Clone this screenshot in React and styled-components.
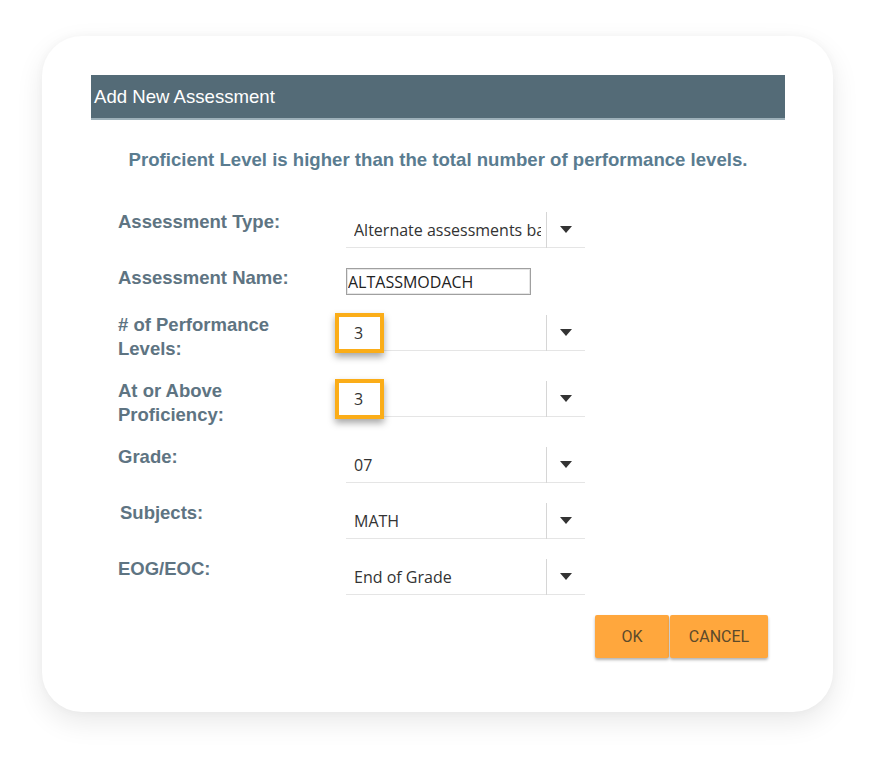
import React from "react";
import styled, { createGlobalStyle } from "styled-components";

const GlobalStyle = createGlobalStyle`
  html, body {
    margin: 0;
    padding: 0;
    background: #ffffff;
  }
  * {
    box-sizing: border-box;
  }
`;

const fields = [
  { label: "Assessment Type:", value: "Alternate assessments based on modified achievement standards" },
  { label: "Assessment Name:", input: "ALTASSMODACH" },
  { label: "# of Performance\nLevels:", value: "3", marked: true },
  { label: "At or Above\nProficiency:", value: "3", marked: true },
  { label: "Grade:", value: "07" },
  { label: "Subjects:", value: "MATH", indent: 2 },
  { label: "EOG/EOC:", value: "End of Grade" },
];

export default function App() {
  return (
    <Page>
      <GlobalStyle />
      <Card>
        <TitleBar>Add New Assessment</TitleBar>
        <Message>
          Proficient Level is higher than the total number of performance
          levels.
        </Message>
        <Form>
          {fields.map((f) => (
            <Row key={f.label}>
              <Label $indent={f.indent}>
                {f.label.split("\n").map((line, i) => (
                  <React.Fragment key={i}>
                    {i > 0 && <br />}
                    {line}
                  </React.Fragment>
                ))}
              </Label>
              {f.input ? (
                <TextInput defaultValue={f.input} />
              ) : (
                <Select>
                  <SelectValue title={f.value}>{f.value}</SelectValue>
                  <ArrowBox>
                    <svg width="12" height="7" viewBox="0 0 12 7">
                      <path d="M0 0 L12 0 L6 7 Z" fill="#333" />
                    </svg>
                  </ArrowBox>
                  {f.marked && <Highlight />}
                </Select>
              )}
            </Row>
          ))}
        </Form>
        <Buttons>
          <Button>OK</Button>
          <Button $wide>CANCEL</Button>
        </Buttons>
      </Card>
    </Page>
  );
}

const Page = styled.div`
  width: 875px;
  height: 761px;
  padding: 36px 42px 0 42px;
`;

const Card = styled.div`
  width: 791px;
  height: 676px;
  background: #ffffff;
  border-radius: 40px;
  box-shadow: 0 10px 28px rgba(0, 0, 0, 0.09), 0 0 10px rgba(0, 0, 0, 0.03);
  padding: 39px 48px 0 49px;
`;

const TitleBar = styled.div`
  height: 45px;
  background: #546b77;
  border-bottom: 2px solid #9db0b9;
  color: #ffffff;
  font-family: "Liberation Sans", Arial, sans-serif;
  font-size: 18.6px;
  line-height: 43px;
  padding-left: 3px;
`;

const Message = styled.div`
  margin-top: 29px;
  text-align: center;
  font-family: "Liberation Sans", Arial, sans-serif;
  font-weight: bold;
  font-size: 18.6px;
  line-height: 22px;
  color: #5a7c90;
`;

const Form = styled.div`
  margin-top: 41px;
  padding-left: 27px;
`;

const Row = styled.div`
  display: grid;
  grid-template-columns: 228px 239px;
  align-items: start;
  margin-bottom: 20px;
`;

const Label = styled.div`
  margin-top: -2px;
  padding-left: ${(p) => p.$indent || 0}px;
  font-family: "Liberation Sans", Arial, sans-serif;
  font-weight: bold;
  font-size: 18.5px;
  line-height: 24px;
  color: #5e7482;
`;

const Select = styled.div`
  position: relative;
  display: flex;
  align-items: center;
  height: 36px;
  border-bottom: 1px solid #e5e5e5;
  font-family: "Open Sans", "Noto Sans", sans-serif;
  font-size: 16px;
  color: #333333;
`;

const SelectValue = styled.div`
  flex: 1;
  min-width: 0;
  margin: 0 5px 0 8px;
  white-space: nowrap;
  overflow: hidden;
  text-overflow: clip;
`;

const ArrowBox = styled.div`
  width: 39px;
  height: 36px;
  border-left: 1px solid #d6d6d6;
  display: flex;
  align-items: center;
  justify-content: center;
`;

const Highlight = styled.div`
  position: absolute;
  left: -11px;
  top: -2px;
  width: 49px;
  height: 40px;
  border: 4px solid #fbad18;
  box-shadow: 0 4px 7px rgba(0, 0, 0, 0.35);
  pointer-events: none;
`;

const TextInput = styled.input`
  width: 185px;
  height: 27px;
  border: 1px solid #a0a0a0;
  box-shadow: inset 0 0 0 1px #e6e6e6;
  padding: 0 0 0 1px;
  font-family: "Open Sans", "Noto Sans", sans-serif;
  font-size: 16px;
  color: #222222;
  outline: none;
`;

const Buttons = styled.div`
  display: flex;
  justify-content: flex-end;
  gap: 1px;
  padding-right: 17px;
`;

const Button = styled.button`
  width: ${(p) => (p.$wide ? 98 : 74)}px;
  height: 43px;
  border: none;
  border-radius: 2px;
  background: #ffa73d;
  color: #5c4a2b;
  font-family: Roboto, "Liberation Sans", sans-serif;
  font-size: 16px;
  box-shadow: 0 2px 3px rgba(0, 0, 0, 0.3);
  cursor: pointer;
`;
